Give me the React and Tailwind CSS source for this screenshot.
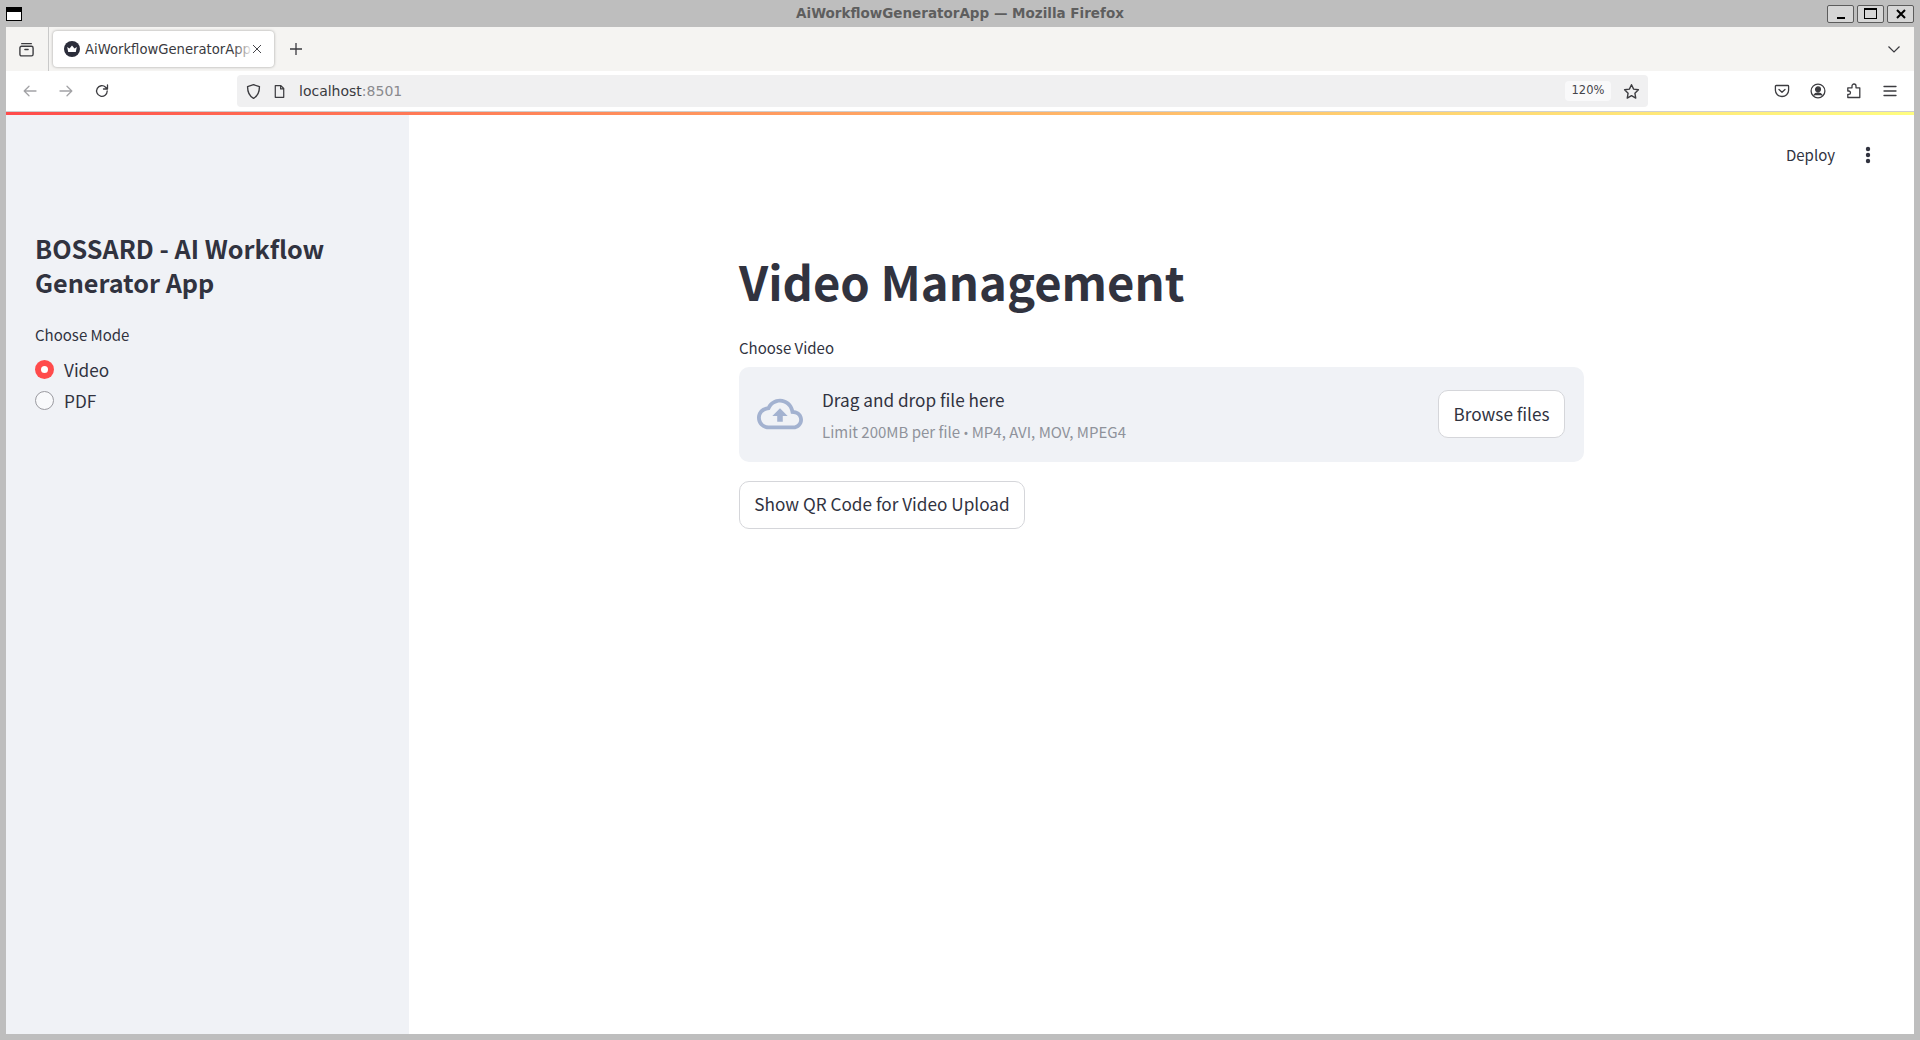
import React from "react";

const ui = "font-['DejaVu_Sans',sans-serif]";
const st = "font-['Noto_Sans_CJK_SC','Noto_Sans',sans-serif]";

function WinBtn({ children }) {
  return (
    <div className="flex h-[18px] w-[27px] items-center justify-center rounded-[2px] border border-[#5c5c5c] bg-[#d6d6d6]">
      {children}
    </div>
  );
}

function Ico({ children, className = "", size = 16, stroke = "#3c3c40" }) {
  return (
    <svg width={size} height={size} viewBox="0 0 16 16" fill="none" stroke={stroke} strokeWidth="1.3" strokeLinecap="round" strokeLinejoin="round" className={className}>
      {children}
    </svg>
  );
}

function TitleBar() {
  return (
    <div className="relative flex h-[27px] shrink-0 items-center justify-between bg-[#bebebe] pl-[6px] pr-[6px]">
      <div className="h-[14px] w-[16px] border border-black bg-white">
        <div className="h-[4px] bg-black" />
      </div>
      <div className={`absolute inset-x-0 top-0 text-center text-[13.5px] font-bold leading-[27px] text-[#5e5e5e] ${ui}`}>
        AiWorkflowGeneratorApp — Mozilla Firefox
      </div>
      <div className="relative flex gap-[3px]">
        <WinBtn><div className="mt-[8px] h-[2px] w-[8px] bg-black" /></WinBtn>
        <WinBtn><div className="h-[11px] w-[13px] border border-black border-t-[2px]" /></WinBtn>
        <WinBtn>
          <svg width="10" height="10" viewBox="0 0 10 10" stroke="black" strokeWidth="2"><path d="M1 1l8 8M9 1l-8 8" /></svg>
        </WinBtn>
      </div>
    </div>
  );
}

function TabBar() {
  return (
    <div className="flex h-[44px] shrink-0 items-center bg-[#f5f4f2]">
      <div className="flex w-[42px] shrink-0 items-center justify-center pr-[2px]">
        <Ico size={17}>
          <path d="M3.500 2.500h9" />
          <rect x="1.800" y="5" width="12.400" height="9" rx="1.500" />
          <path d="M6.500 8h3" />
        </Ico>
      </div>
      <div className="h-[44px] w-px bg-[#c9c9c9]" />
      <div className="ml-[4px] flex h-[36px] w-[221px] items-center rounded-[4px] bg-white pl-[11px] shadow-[0_0_3px_rgba(0,0,0,0.35)]">
        <svg width="16" height="16" viewBox="0 0 16 16" className="shrink-0">
          <circle cx="8" cy="8" r="8" fill="#2b2d3a" />
          <path d="M3.200 6l2.300 1.600L8 4.600l2.500 3L12.800 6l-1 5H4.200z" fill="#fff" />
        </svg>
        <div className={`relative ml-[5px] h-[36px] w-[168px] shrink-0 overflow-hidden whitespace-nowrap text-[13.2px] leading-[37px] text-[#3a3a40] ${ui}`}>
          AiWorkflowGeneratorApp
          <div className="absolute inset-y-0 right-0 w-[20px] bg-gradient-to-r from-transparent to-white" />
        </div>
        <svg width="12" height="12" viewBox="0 0 12 12" stroke="#45454a" strokeWidth="1" className="-ml-[2px]">
          <path d="M2 2l8 8M10 2l-8 8" />
        </svg>
      </div>
      <div className="ml-[15px]">
        <svg width="14" height="14" viewBox="0 0 14 14" stroke="#3a3a3f" strokeWidth="1.300"><path d="M7 1v12M1 7h12" /></svg>
      </div>
      <div className="ml-auto mr-[13px]">
        <svg width="14" height="14" viewBox="0 0 14 14" fill="none" stroke="#3a3a3f" strokeWidth="1.200"><path d="M1.500 4.500L7 10l5.500-5.500" /></svg>
      </div>
    </div>
  );
}

function NavBar() {
  return (
    <div className="flex h-[41px] shrink-0 items-center border-b border-[#cfcfd0] bg-white">
      <div className="ml-[16px] flex items-center gap-[20px]">
        <Ico stroke="#a3a3a6"><path d="M14 8H2.500M7 3.200L2.200 8 7 12.800" /></Ico>
        <Ico stroke="#a3a3a6"><path d="M2 8h11.500M9 3.200L13.800 8 9 12.800" /></Ico>
        <Ico><path d="M13.200 8A5.300 5.300 0 1 1 11.600 4.200L13.500 6M13.500 2v4h-4" /></Ico>
      </div>
      <div className={`ml-[127px] flex h-[32px] w-[1411px] items-center rounded-[4px] bg-[#f0f0f1] ${ui}`}>
        <Ico className="ml-[8px]" size={17}>
          <path d="M8 1.600l5.600 1.800c0 5-1 8.800-5.600 11-4.600-2.200-5.600-6-5.600-11z" />
        </Ico>
        <Ico className="ml-[10px]" size={15}>
          <path d="M3.500 1.800h6l3 3v9.400h-9zM9.200 1.800v3.400h3.300" />
        </Ico>
        <span className="ml-[12px] text-[14px] text-[#3a3a40]">localhost<span className="text-[#8a8a8e]">:8501</span></span>
        <div className="ml-auto flex h-[20px] w-[46px] items-center justify-center rounded-[4px] bg-[#f9f9fa] text-[11.500px] text-[#45454a]">120%</div>
        <Ico className="ml-[12px] mr-[8px]" size={17}>
          <path d="M8 1.600l2 4.200 4.500.6-3.300 3.200.8 4.600L8 11.900l-4 2.300.8-4.600L1.500 6.400 6 5.800z" />
        </Ico>
      </div>
      <div className="ml-[126px] flex items-center gap-[20px]">
        <Ico size={16}>
          <path d="M2.200 2.500h11.600c.5 0 .8.3.8.8v4c0 3.500-3 6.200-6.600 6.200s-6.600-2.700-6.600-6.200v-4c0-.5.3-.8.8-.8z" />
          <path d="M5 6.500L8 9.300l3-2.800" />
        </Ico>
        <Ico size={16}>
          <circle cx="8" cy="8" r="6.900" />
          <circle cx="8" cy="6.300" r="2.400" fill="#3c3c40" />
          <path d="M3.800 12.300c1-1.800 2.500-2.300 4.200-2.300s3.200.5 4.200 2.300" fill="#3c3c40" />
        </Ico>
        <Ico size={16}>
          <path d="M6 3.800V3a2 2 0 0 1 4 0v1.800h3.800V14.500H1.800v-3.200h1a1.500 1.500 0 0 0 0-3.300h-1V4.800H6z" />
        </Ico>
        <Ico size={16}>
          <path d="M2 3.500h12M2 8h12M2 12.500h12" />
        </Ico>
      </div>
    </div>
  );
}

function Radio({ checked, label }) {
  return (
    <div className="flex h-[31px] items-center">
      {checked ? (
        <div className="flex h-[19px] w-[19px] items-center justify-center rounded-full bg-[#ff4b4b]">
          <div className="h-[7px] w-[7px] rounded-full bg-white" />
        </div>
      ) : (
        <div className="h-[19px] w-[19px] rounded-full border border-[#9a9aa0] bg-[#f8f9fb]" />
      )}
      <span className="ml-[10px] text-[17.200px] leading-[24px] text-[#31333f]">{label}</span>
    </div>
  );
}

function Sidebar() {
  return (
    <aside className="flex w-[403px] shrink-0 flex-col bg-[#f0f2f6] pl-[29px] pr-[29px] pt-[116px]">
      <h2 className="text-[25.200px] font-semibold leading-[34px] text-[#31333f]">
        BOSSARD - AI Workflow Generator App
      </h2>
      <div className="mt-[24px] text-[15px] leading-[24px] text-[#31333f]">Choose Mode</div>
      <div className="mt-[7px]">
        <Radio checked label="Video" />
        <Radio label="PDF" />
      </div>
    </aside>
  );
}

function Main() {
  return (
    <main className="relative flex min-w-0 flex-1 flex-col items-center bg-white">
      <div className="absolute right-[43px] top-[28px] flex items-center">
        <span className="text-[15px] leading-[24px] text-[#31333f]">Deploy</span>
        <svg width="6" height="18" viewBox="0 0 6 18" fill="#31333f" className="ml-[30px]">
          <circle cx="3" cy="3" r="2.200" /><circle cx="3" cy="9" r="2.200" /><circle cx="3" cy="15" r="2.200" />
        </svg>
      </div>
      <div className="mt-[134px] w-[845px]">
        <h1 className="text-[47.200px] font-bold leading-[64px] text-[#31333f]">Video Management</h1>
        <div className="mt-[23px] text-[15px] leading-[24px] text-[#31333f]">Choose Video</div>
        <div className="mt-[7px] flex h-[95px] items-center rounded-[10px] bg-[#f0f2f6] pl-[18px] pr-[19px]">
          <svg width="46" height="46" viewBox="0 0 24 24" fill="#a3b2d0" className="mb-[2px] shrink-0">
            <path d="M19.35 10.04C18.67 6.59 15.64 4 12 4 9.11 4 6.6 5.64 5.35 8.04 2.34 8.36 0 10.91 0 14c0 3.31 2.69 6 6 6h13c2.76 0 5-2.24 5-5 0-2.64-2.05-4.78-4.65-4.96zM19 18H6c-2.21 0-4-1.79-4-4 0-2.05 1.53-3.76 3.56-3.97l1.07-.11.5-.95C8.08 7.14 9.94 6 12 6c2.62 0 4.88 1.86 5.39 4.43l.3 1.5 1.53.11c1.56.1 2.78 1.41 2.78 2.96 0 1.65-1.35 3-3 3zM8 13h2.55v3h2.9v-3H16l-4-4z" />
          </svg>
          <div className="ml-[19px] pt-[2px]">
            <div className="text-[17.200px] leading-[27px] text-[#31333f]">Drag and drop file here</div>
            <div className="mt-[7px] text-[15px] leading-[24px] text-[#8f929b]">
              Limit 200MB per file <span className="font-['Noto_Sans',sans-serif] text-[13px]">•</span> MP4, AVI, MOV, MPEG4
            </div>
          </div>
          <button className="mb-[1px] ml-auto h-[48px] w-[127px] rounded-[10px] border border-[#d5d6da] bg-white pb-[1px] text-[17.200px] text-[#31333f]">
            Browse files
          </button>
        </div>
        <button className="mt-[19px] h-[48px] w-[286px] rounded-[10px] border border-[#d5d6da] bg-white pb-[2px] text-[17.200px] text-[#31333f]">
          Show QR Code for Video Upload
        </button>
      </div>
    </main>
  );
}

export default function App() {
  return (
    <div className="flex h-[1040px] w-[1920px] flex-col overflow-hidden bg-[#bebebe]">
      <TitleBar />
      <div className="flex min-h-0 flex-1 flex-col pb-[6px] pl-[6px] pr-[6px]">
        <TabBar />
        <NavBar />
        <div className="h-[3px] shrink-0 bg-gradient-to-r from-[#ff4b4b] to-[#fffd80]" />
        <div className={`flex min-h-0 flex-1 ${st}`}>
          <Sidebar />
          <Main />
        </div>
      </div>
    </div>
  );
}
